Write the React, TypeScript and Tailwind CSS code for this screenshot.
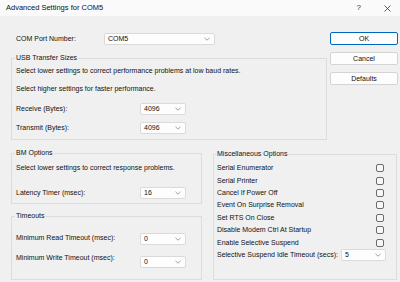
import React from "react";

const Chevron = () => (
  <svg width="6" height="4" viewBox="0 0 6 4" className="shrink-0">
    <path d="M0.5 0.8 L3 3.2 L5.5 0.8" fill="none" stroke="#8a8a8a" strokeWidth="0.8" />
  </svg>
);

function Combo({ value, className }: { value: string; className: string }) {
  return (
    <div
      className={
        "h-[12px] bg-[#fdfdfd] border border-[#dadada] rounded-[2px] flex items-center justify-between pl-[3px] pr-[4px] " +
        className
      }
    >
      <span>{value}</span>
      <Chevron />
    </div>
  );
}

function Btn({ label, primary }: { label: string; primary?: boolean }) {
  return (
    <div
      className={
        primary
          ? "h-[13px] w-[68px] bg-[#fdfdfd] border border-[#0067c0] rounded-[2px] flex items-center justify-center"
          : "h-[13px] w-[68px] bg-[#fdfdfd] border border-[#d4d4d4] rounded-[2px] flex items-center justify-center"
      }
    >
      {label}
    </div>
  );
}

function Check() {
  return <div className="w-[8px] h-[8px] border border-[#6b6b6b] rounded-[2px] bg-[#f7f7f7]" />;
}

export default function App() {
  const misc = [
    "Serial Enumerator",
    "Serial Printer",
    "Cancel If Power Off",
    "Event On Surprise Removal",
    "Set RTS On Close",
    "Disable Modem Ctrl At Startup",
    "Enable Selective Suspend",
  ];
  return (
    <div
      className="w-[400px] h-[282px] overflow-hidden bg-[#f0f0f0] text-[#111] text-[7px] leading-[10px]"
      style={{ fontFamily: '"Liberation Sans", Arial, sans-serif' }}
    >
      {/* Title bar */}
      <div className="h-[16px] bg-[#fafafa] flex items-center justify-between pl-[6px] pr-[9px]">
        <span className="text-[7.5px]">Advanced Settings for COM5</span>
        <div className="flex items-center gap-[23px]">
          <span className="text-[8px] text-[#333]">?</span>
          <svg width="7" height="7" viewBox="0 0 7 7">
            <path d="M0.5 0.5 L6.5 6.5 M6.5 0.5 L0.5 6.5" stroke="#333" strokeWidth="0.8" />
          </svg>
        </div>
      </div>

      {/* Top section */}
      <div className="flex">
        <div className="ml-[11px] w-[316px]">
          <div className="mt-[17px] h-[12px] flex items-center">
            <span className="pl-[5px] w-[93px]">COM Port Number:</span>
            <Combo value="COM5" className="w-[111px]" />
          </div>
          <fieldset className="mt-[8px] border border-[#dcdcdc] pl-[4px] pr-[4px] pb-[5px]">
            <legend className="ml-[-1px] px-[1px] h-[10px]">USB Transfer Sizes</legend>
            <div className="mt-[3px] h-[10px]">
              Select lower settings to correct performance problems at low baud rates.
            </div>
            <div className="mt-[8px] h-[10px]">Select higher settings for faster performance.</div>
            <div className="mt-[9px] h-[12px] flex items-center">
              <span className="w-[124px]">Receive (Bytes):</span>
              <Combo value="4096" className="w-[46px]" />
            </div>
            <div className="mt-[7px] h-[12px] flex items-center">
              <span className="w-[124px]">Transmit (Bytes):</span>
              <Combo value="4096" className="w-[46px]" />
            </div>
          </fieldset>
        </div>
        <div className="ml-[3px] mt-[16px] flex flex-col gap-[7px]">
          <Btn label="OK" primary />
          <Btn label="Cancel" />
          <Btn label="Defaults" />
        </div>
      </div>

      {/* Bottom section */}
      <div className="flex ml-[11px]">
        <div className="w-[191px] flex flex-col">
          <fieldset className="mt-[8px] border border-[#dcdcdc] pl-[4px] pr-[4px] pb-[4px]">
            <legend className="ml-[-1px] px-[1px] h-[10px]">BM Options</legend>
            <div className="mt-[5px] h-[10px]">Select lower settings to correct response problems.</div>
            <div className="mt-[14px] h-[12px] flex items-center">
              <span className="w-[124px]">Latency Timer (msec):</span>
              <Combo value="16" className="w-[46px]" />
            </div>
          </fieldset>
          <fieldset className="mt-[7px] border border-[#dcdcdc] pl-[4px] pr-[4px] pb-[11px]">
            <legend className="ml-[-1px] px-[1px] h-[10px]">Timeouts</legend>
            <div className="mt-[12px] h-[12px] flex items-center">
              <span className="w-[124px] mb-[3px]">Minimum Read Timeout (msec):</span>
              <Combo value="0" className="w-[46px]" />
            </div>
            <div className="mt-[11px] h-[12px] flex items-center">
              <span className="w-[124px] mb-[8px]">Minimum Write Timeout (msec):</span>
              <Combo value="0" className="w-[46px]" />
            </div>
          </fieldset>
        </div>
        <fieldset className="ml-[11px] mt-[9px] w-[184px] h-[131px] border border-[#dcdcdc] pl-[3px] pr-[12px]">
          <legend className="ml-[-1px] px-[1px] h-[10px]">Miscellaneous Options</legend>
          <div className="mt-[3px] flex flex-col">
            {misc.map((m) => (
              <div key={m} className="h-[12.4px] flex items-center justify-between">
                <span>{m}</span>
                <Check />
              </div>
            ))}
            <div className="mt-[0.2px] h-[12px] flex items-center justify-between">
              <span>Selective Suspend Idle Timeout (secs):</span>
              <Combo value="5" className="w-[45px] -mr-[2px]" />
            </div>
          </div>
        </fieldset>
      </div>
    </div>
  );
}
